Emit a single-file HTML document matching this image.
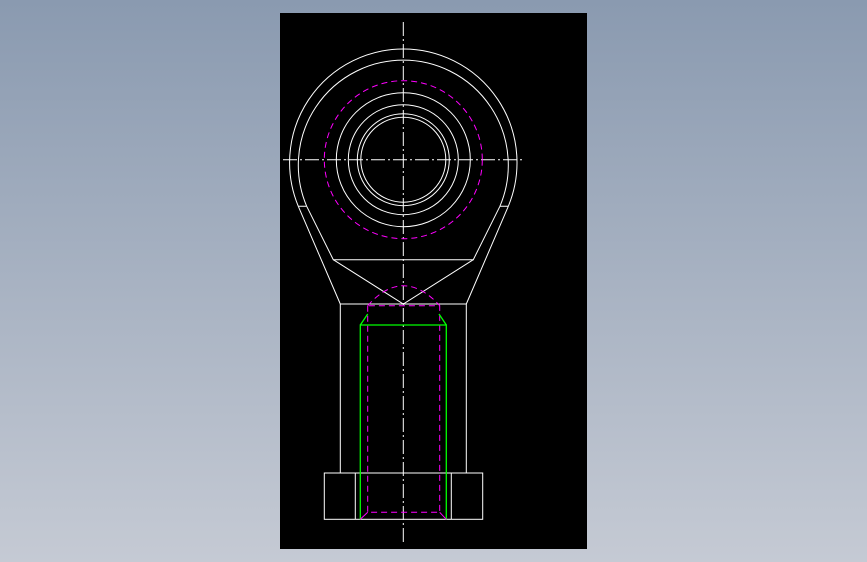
<!DOCTYPE html><html><head><style>
html,body{margin:0;padding:0;width:867px;height:562px;overflow:hidden;background:linear-gradient(#8a9ab0,#c5cad4);}
svg{position:absolute;left:0;top:0}
</style></head><body>
<svg width="867" height="562" viewBox="0 0 867 562">
<rect x="280" y="13" width="307" height="536" fill="#000"/>
<g fill="none" stroke="#fff" stroke-width="1">
<path d="M298.3 206.3 A113.7 113.7 0 1 1 508.3 206.3"/>
<path d="M306.7 206.3 A105 105 0 1 1 499.9 206.3"/>
<path d="M298.3 206.3H306.7M499.9 206.3H508.3"/>
<path d="M298.3 206.3L340.3 304M508.3 206.3L466.3 304"/>
<path d="M306.7 206.3L333.3 259.7H473.3L499.9 206.3"/>
<path d="M333.3 259.7L403.3 304L473.3 259.7"/>
<circle cx="403.3" cy="159.7" r="67"/>
<circle cx="403.3" cy="159.7" r="55"/>
<circle cx="403.3" cy="159.7" r="46"/>
<circle cx="403.3" cy="159.7" r="42.5"/>
<rect x="340.3" y="304" width="126" height="169"/>
<rect x="324.3" y="473" width="158.4" height="46.3"/>
<path d="M355.3 473V519.3M451.3 473V519.3"/>
</g>
<g fill="none" stroke="#fff" stroke-width="1" stroke-dasharray="14 3 2 3">
<path d="M403.3 22V542M283 159.7H524"/>
</g>
<g fill="none" stroke="#f0f" stroke-width="1" stroke-dasharray="6 4">
<circle cx="403.3" cy="159.7" r="79"/>
<path d="M367.7 305.7V512.3H439.7V305.7Z"/>
<path d="M367.7 305.7Q385 286 403.3 285.7Q422 286 439.7 305.7"/>
</g>
<g fill="none" stroke="#0f0" stroke-width="1.3">
<path d="M360.3 519.3V325H446.3V519.3"/>
<path d="M360.3 325L367.7 314M446.3 325L439 314"/>
</g>
<g fill="none" stroke="#f0f" stroke-width="1"><path d="M360.3 519.3L367.7 512.3M446.3 519.3L439.7 512.3"/></g>
</svg>
</body></html>
